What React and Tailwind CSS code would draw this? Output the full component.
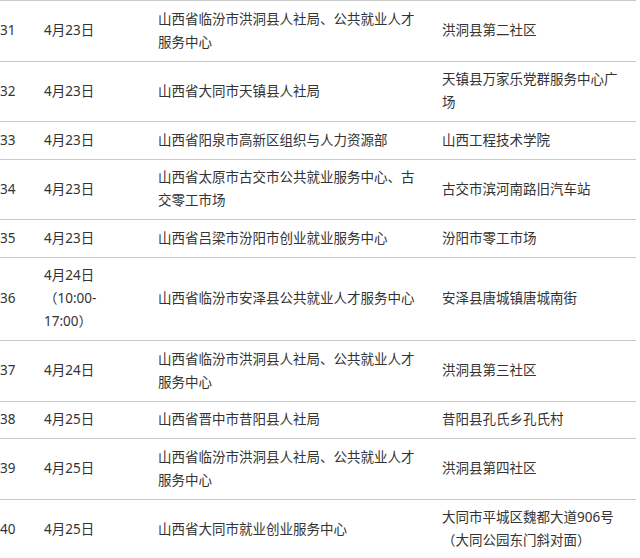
const rows = [
  { n: "31", d: ["4月23日"], o: "山西省临汾市洪洞县人社局、公共就业人才服务中心", l: "洪洞县第二社区" },
  { n: "32", d: ["4月23日"], o: "山西省大同市天镇县人社局", l: "天镇县万家乐党群服务中心广场" },
  { n: "33", d: ["4月23日"], o: "山西省阳泉市高新区组织与人力资源部", l: "山西工程技术学院" },
  { n: "34", d: ["4月23日"], o: "山西省太原市古交市公共就业服务中心、古交零工市场", l: "古交市滨河南路旧汽车站" },
  { n: "35", d: ["4月23日"], o: "山西省吕梁市汾阳市创业就业服务中心", l: "汾阳市零工市场" },
  { n: "36", d: ["4月24日", "（10:00-", "17:00）"], o: "山西省临汾市安泽县公共就业人才服务中心", l: "安泽县唐城镇唐城南街" },
  { n: "37", d: ["4月24日"], o: "山西省临汾市洪洞县人社局、公共就业人才服务中心", l: "洪洞县第三社区" },
  { n: "38", d: ["4月25日"], o: "山西省晋中市昔阳县人社局", l: "昔阳县孔氏乡孔氏村" },
  { n: "39", d: ["4月25日"], o: "山西省临汾市洪洞县人社局、公共就业人才服务中心", l: "洪洞县第四社区" },
  { n: "40", d: ["4月25日"], o: "山西省大同市就业创业服务中心", l: "大同市平城区魏都大道906号（大同公园东门斜对面）" },
];

export default function App() {
  return (
    <div
      className="w-[640px] h-[558px] overflow-hidden bg-white text-[#333333] text-[13.5px] leading-[23px]"
      style={{ fontFamily: '"Noto Sans", "Noto Sans CJK SC", sans-serif' }}
    >
      <table className="w-[636px] border-collapse table-fixed">
        <colgroup>
          <col className="w-[36px]" />
          <col className="w-[114px]" />
          <col className="w-[284px]" />
          <col className="w-[202px]" />
        </colgroup>
        <tbody>
          {rows.map((r) => (
            <tr key={r.n} className="border-t border-[#c8c8c8]">
              <td className="align-middle py-[6.75px] pl-0 pr-1">{r.n}</td>
              <td className="align-middle py-[6.75px] pl-2 pr-2">
                {r.d.map((x, i) => (
                  <div key={i}>{x}</div>
                ))}
              </td>
              <td className="align-middle py-[6.75px] pl-2 pr-[14px]">{r.o}</td>
              <td className="align-middle py-[6.75px] pl-2 pr-[12px]">{r.l}</td>
            </tr>
          ))}
        </tbody>
      </table>
    </div>
  );
}
